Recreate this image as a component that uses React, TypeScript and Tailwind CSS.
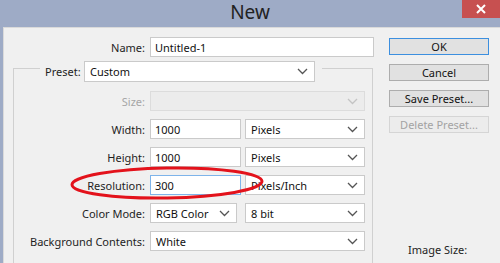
import React from "react";

const Chevron = ({ color = "#555" }: { color?: string }) => (
  <svg width="11" height="7" viewBox="0 0 11 7" fill="none">
    <path d="M1 1l4.5 4.5L10 1" stroke={color} strokeWidth="1.3" />
  </svg>
);

const Select = ({
  value,
  className,
  disabled,
}: {
  value?: string;
  className: string;
  disabled?: boolean;
}) => (
  <div
    className={
      "h-[20px] flex items-center justify-between pl-[5px] pr-[6px] border " +
      (disabled ? "bg-[#ececec] border-[#dcdcdc] " : "bg-white border-[#cacaca] ") +
      className
    }
  >
    <span className="text-[#111]">{value}</span>
    <Chevron color={disabled ? "#c4c4c4" : "#555"} />
  </div>
);

const Input = ({ value, className }: { value: string; className: string }) => (
  <div className={"h-[20px] flex items-center pl-[4px] bg-white border " + className}>
    <span className="text-[#111]">{value}</span>
  </div>
);

const Row = ({
  label,
  disabled,
  children,
}: {
  label: string;
  disabled?: boolean;
  children: React.ReactNode;
}) => (
  <div className="flex items-center h-[20px]">
    <div
      className={
        "w-[132px] text-right pr-[1px] " + (disabled ? "text-[#a6a6a6]" : "text-[#1e1e1e]")
      }
    >
      {label}
    </div>
    <div className="ml-[4px] flex gap-[4px]">{children}</div>
  </div>
);

const Button = ({
  label,
  variant,
}: {
  label: string;
  variant?: "default" | "disabled";
}) => {
  let cls = "bg-[#e1e1e1] border-[#adadad] text-[#111]";
  if (variant === "default") cls = "bg-[#e1e1e1] border-[#3c8fdf] text-[#111]";
  if (variant === "disabled") cls = "bg-[#ececec] border-[#d5d5d5] text-[#a3a3a3]";
  return (
    <div className={"w-[100px] h-[17px] flex items-center justify-center border " + cls}>
      {label}
    </div>
  );
};

export default function App() {
  return (
    <div
      className="w-[500px] h-[263px] bg-[#9eabc6] overflow-hidden relative text-[11px] leading-none"
      style={{ fontFamily: '"Noto Sans", "Open Sans", sans-serif' }}
    >
      <div className="h-[27px] flex items-center justify-center relative">
        <span className="text-[19px] text-[#222] -mt-[2px]">New</span>
        <div className="absolute top-0 right-0 w-[38px] h-[18px] bg-[#c75050] flex items-center justify-center">
          <svg width="10" height="10" viewBox="0 0 10 10">
            <path d="M1 1l8 8M9 1l-8 8" stroke="#fff" strokeWidth="2" />
          </svg>
        </div>
      </div>

      <div className="ml-[3px] h-[236px] bg-[#f0f0f0] border-l border-t border-[#dadada] flex">
        {/* form */}
        <div className="w-[370px] pt-[9px]">
          <div className="flex items-center h-[20px]">
            <div className="w-[142px] text-right text-[#1e1e1e] pr-[1px]">Name:</div>
            <Input value="Untitled-1" className="ml-[4px] w-[224px] border-[#cacaca]" />
          </div>

          <div className="mt-[11px] ml-[9px] w-[360px] h-[200px] border-l border-t border-r border-[#d0d0d0]">
            <div className="-mt-[8px] ml-[26px] w-[282px] h-[21px] bg-[#f0f0f0] flex items-center">
              <span className="ml-[5px] text-[#1e1e1e]">Preset:</span>
              <Select value="Custom" className="ml-auto mr-[7px] w-[231px] h-[21px]" />
            </div>

            <div className="mt-[9px] flex flex-col gap-[8px]">
              <Row label="Size:" disabled>
                <Select className="w-[215px]" disabled />
              </Row>
              <Row label="Width:">
                <Input value="1000" className="w-[91px] border-[#cacaca]" />
                <Select value="Pixels" className="w-[120px]" />
              </Row>
              <Row label="Height:">
                <Input value="1000" className="w-[91px] border-[#cacaca]" />
                <Select value="Pixels" className="w-[120px]" />
              </Row>
              <Row label="Resolution:">
                <Input value="300" className="w-[91px] border-[#7eb4ea]" />
                <Select value="Pixels/Inch" className="w-[120px]" />
              </Row>
              <Row label="Color Mode:">
                <Select value="RGB Color" className="w-[87px]" />
                <Select value="8 bit" className="ml-[4px] w-[120px]" />
              </Row>
              <Row label="Background Contents:">
                <Select value="White" className="w-[215px]" />
              </Row>
            </div>
          </div>
        </div>

        {/* buttons */}
        <div className="pl-[15px] pt-[10px] flex flex-col">
          <div className="flex flex-col gap-[9px]">
            <Button label="OK" variant="default" />
            <Button label="Cancel" />
            <Button label="Save Preset..." />
            <Button label="Delete Preset..." variant="disabled" />
          </div>
          <div className="mt-[111px] ml-[19px] text-[#1e1e1e]">Image Size:</div>
        </div>
      </div>

      <svg
        className="absolute left-0 top-0 pointer-events-none"
        width="500"
        height="263"
        viewBox="0 0 500 263"
      >
        <ellipse
          cx="167"
          cy="183"
          rx="95"
          ry="15"
          fill="none"
          stroke="#e3121b"
          strokeWidth="3"
          transform="rotate(-1 167 183)"
        />
      </svg>
    </div>
  );
}
